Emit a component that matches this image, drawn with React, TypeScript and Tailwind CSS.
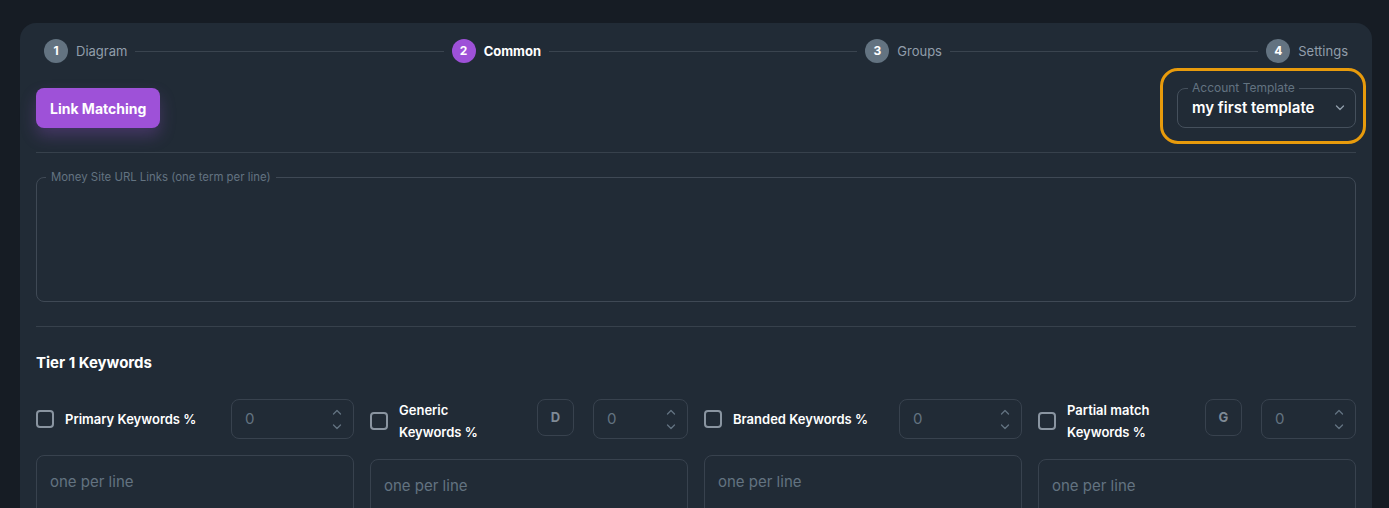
import React from "react";

const FONT = { fontFamily: "Inter, 'Noto Sans', sans-serif" };

function Step({ n, label, active }: { n: number; label: string; active?: boolean }) {
  return (
    <div className="flex items-center gap-2 px-2">
      <div
        className={
          "flex h-6 w-6 items-center justify-center rounded-full text-[12px] font-bold text-white " +
          (active ? "bg-[#9E51D8]" : "bg-[#637381]")
        }
      >
        {n}
      </div>
      <span
        className={
          "text-[13px] leading-[22px] " +
          (active ? "font-bold text-white" : "text-[#919EAB]")
        }
      >
        {label}
      </span>
    </div>
  );
}

function Connector() {
  return <div className="h-px flex-1 bg-[#3a444f]" />;
}

function Spinner() {
  return (
    <div className="flex flex-col items-center gap-[9px]">
      <svg width="10" height="6" viewBox="0 0 10 6" fill="none">
        <path d="M1.5 5L5 1.5L8.5 5" stroke="#637381" strokeWidth="1.3" strokeLinecap="round" strokeLinejoin="round" />
      </svg>
      <svg width="10" height="6" viewBox="0 0 10 6" fill="none">
        <path d="M1.5 1L5 4.5L8.5 1" stroke="#637381" strokeWidth="1.3" strokeLinecap="round" strokeLinejoin="round" />
      </svg>
    </div>
  );
}

function NumberInput({ width }: { width: string }) {
  return (
    <div
      className={
        "flex h-10 shrink-0 items-center justify-between rounded-lg border border-[#38424e] pl-[13px] pr-[11px] " +
        width
      }
    >
      <span className="text-[15px] text-[#637381]">0</span>
      <Spinner />
    </div>
  );
}

function LetterButton({ letter }: { letter: string }) {
  return (
    <div className="flex h-[37px] w-[37px] shrink-0 items-center justify-center rounded-lg border border-[#38424e] text-[13px] font-bold text-[#7f8a96]">
      {letter}
    </div>
  );
}

function CheckLabel({ lines }: { lines: string[] }) {
  return (
    <label className="flex min-h-[40px] flex-1 items-center gap-[11px]">
      <span className="h-[18px] w-[18px] shrink-0 rounded-[4px] border-2 border-[#8a95a1]" />
      <span className="text-[13px] font-semibold leading-[22px] text-white">
        {lines.map((l) => (
          <span key={l} className="block whitespace-nowrap">
            {l}
          </span>
        ))}
      </span>
    </label>
  );
}

function KeywordTextarea() {
  return (
    <div className="h-[120px] rounded-lg border border-[#38424e] px-[13px] pt-[13px]">
      <span className="text-[15px] leading-[20px] text-[#637381]">one per line</span>
    </div>
  );
}

export default function App() {
  return (
    <div className="min-h-screen bg-[#161C24] pl-5 pr-[17px] pt-[23px]" style={FONT}>
      <div className="rounded-2xl bg-[#212B36] p-4 pb-10">
        {/* Stepper */}
        <div className="flex items-center">
          <Step n={1} label="Diagram" />
          <Connector />
          <Step n={2} label="Common" active />
          <Connector />
          <Step n={3} label="Groups" />
          <Connector />
          <Step n={4} label="Settings" />
        </div>

        {/* Action row */}
        <div className="mt-[25px] flex items-center justify-between">
          <button className="h-10 rounded-lg bg-[#9E51D8] px-[14px] text-[14px] font-bold text-white shadow-[0_8px_16px_0_rgba(158,81,216,0.28)]">
            Link Matching
          </button>
          <div className="relative">
            <div className="pointer-events-none absolute -bottom-[16px] -left-[17px] -right-[10px] -top-[20px] rounded-[18px] border-[3px] border-[#E89B0C]" />
            <div className="relative flex h-10 w-[179px] items-center justify-between rounded-lg border border-[#45505c] pl-[14px] pr-[10px]">
              <span className="absolute -top-[8px] left-[10px] bg-[#212B36] px-1 text-[12px] leading-[14px] text-[#637381]">
                Account Template
              </span>
              <span className="text-[15px] font-semibold text-white">my first template</span>
              <svg width="10" height="6" viewBox="0 0 10 6" fill="none">
                <path d="M1.5 1L5 4.5L8.5 1" stroke="#919EAB" strokeWidth="1.3" strokeLinecap="round" strokeLinejoin="round" />
              </svg>
            </div>
          </div>
        </div>

        <div className="mt-6 h-px bg-[#37414c]" />

        {/* Money site textarea */}
        <div className="relative mt-6 h-[125px] rounded-lg border border-[#3f4955]">
          <span className="absolute -top-[8px] left-[9px] bg-[#212B36] px-[5px] text-[11.4px] leading-[14px] text-[#637381]">
            Money Site URL Links (one term per line)
          </span>
        </div>

        <div className="mt-6 h-px bg-[#37414c]" />

        <h2 className="mt-6 text-[15px] font-bold leading-6 text-white">Tier 1 Keywords</h2>

        <div className="mt-6 grid grid-cols-4 gap-4">
          <div className="flex flex-col gap-4">
            <div className="flex items-start">
              <CheckLabel lines={["Primary Keywords %"]} />
              <NumberInput width="w-[123px]" />
            </div>
            <KeywordTextarea />
          </div>
          <div className="flex flex-col gap-4">
            <div className="flex items-start">
              <CheckLabel lines={["Generic", "Keywords %"]} />
              <LetterButton letter="D" />
              <div className="ml-[19px]">
                <NumberInput width="w-[95px]" />
              </div>
            </div>
            <KeywordTextarea />
          </div>
          <div className="flex flex-col gap-4">
            <div className="flex items-start">
              <CheckLabel lines={["Branded Keywords %"]} />
              <NumberInput width="w-[123px]" />
            </div>
            <KeywordTextarea />
          </div>
          <div className="flex flex-col gap-4">
            <div className="flex items-start">
              <CheckLabel lines={["Partial match", "Keywords %"]} />
              <LetterButton letter="G" />
              <div className="ml-[19px]">
                <NumberInput width="w-[95px]" />
              </div>
            </div>
            <KeywordTextarea />
          </div>
        </div>
      </div>
    </div>
  );
}
